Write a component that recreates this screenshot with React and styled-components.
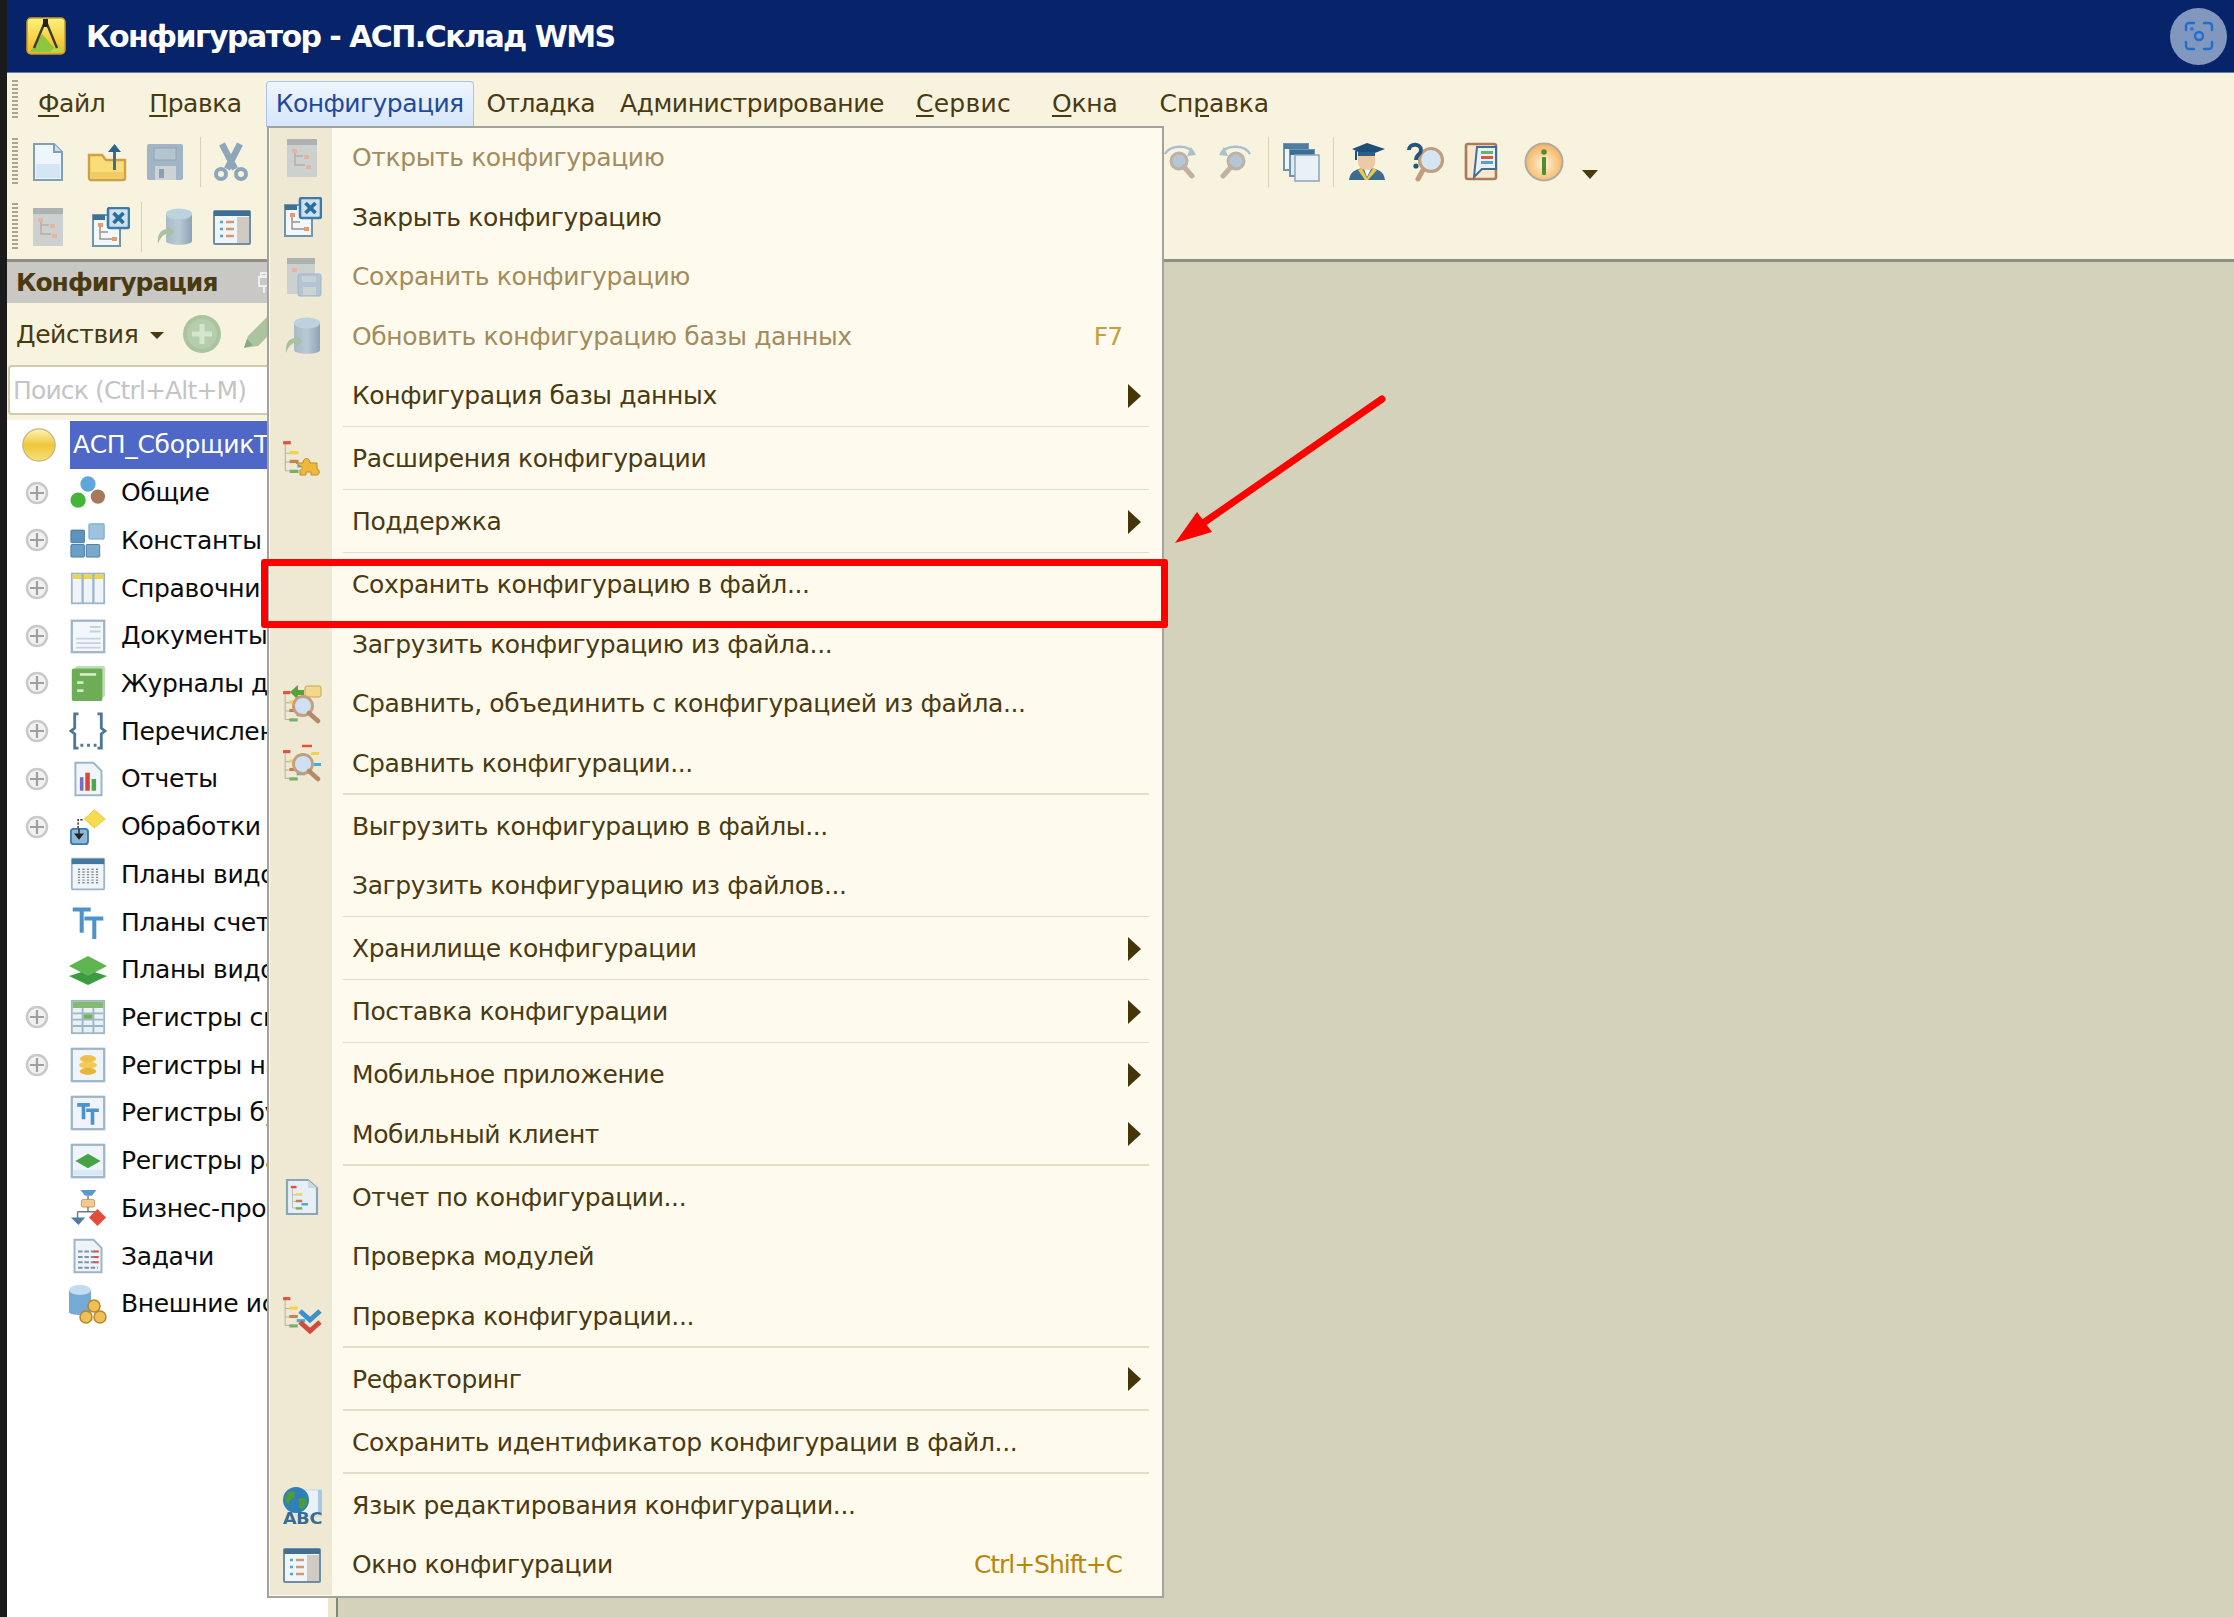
import React from "react";
import styled, { createGlobalStyle } from "styled-components";

const Global = createGlobalStyle`
  html, body { margin: 0; padding: 0; background: #d4d2ba; }
  body { font-family: "DejaVu Sans", "Liberation Sans", sans-serif; }
`;

const FONT = `"DejaVu Sans", "Liberation Sans", sans-serif`;

const Page = styled.div`
  position: relative;
  width: 2234px;
  height: 1617px;
  overflow: hidden;
  display: flex;
  background: #1b1b1b;
  font-family: ${FONT};
`;
const Edge = styled.div`
  width: 7px;
  flex: none;
  background: #1b1b1b;
`;
const Window = styled.div`
  flex: 1;
  min-width: 0;
  display: flex;
  flex-direction: column;
`;
const TitleBar = styled.header`
  flex: none;
  height: 73px;
  box-sizing: border-box;
  border-bottom: 1px solid #5f7fae;
  background: #07246a;
  display: flex;
  align-items: center;
  padding-left: 19px;
  padding-right: 7px;
`;
const TitleText = styled.h1`
  margin: 0 0 0 20px;
  font: bold 30px "DejaVu Sans", sans-serif;
  letter-spacing: -1.55px;
  color: #fff;
  white-space: nowrap;
`;
const ShotButton = styled.div`
  margin-left: auto;
  width: 57px;
  height: 57px;
  border-radius: 50%;
  background: #8297bd;
  display: flex;
  align-items: center;
  justify-content: center;
`;
const MenuBar = styled.nav`
  flex: none;
  height: 54px;
  box-sizing: border-box;
  background: #f7f3df;
  display: flex;
  align-items: center;
  padding-left: 5px;
  color: #4a3a10;
`;
const Grip = styled.div`
  flex: none;
  width: 6px;
  height: ${(p) => p.$h}px;
  background: repeating-linear-gradient(to bottom, #aaa68e 0 2px, transparent 2px 4px);
`;
const BarItem = styled.div`
  flex: none;
  margin-left: ${(p) => p.$ml}px;
  padding-top: 6px;
  font-size: 25px;
  white-space: nowrap;
  letter-spacing: ${(p) => p.$ls ?? -0.45}px;
  ${(p) =>
    p.$active &&
    `
    height: 46px;
    box-sizing: border-box;
    padding: 0 9px 2px;
    display: flex;
    align-items: center;
    color: #1f4a9a;
    background: linear-gradient(#eef5fd, #d5e6fb);
    border: 1px solid #a6c4ec;
    border-bottom: none;
    border-radius: 4px 4px 0 0;
    align-self: flex-end;
  `}
`;
const Mnemonic = styled.span`
  text-decoration: underline;
  text-underline-offset: 3px;
  text-decoration-thickness: 2px;
`;
const Toolbar = styled.div`
  flex: none;
  height: 135px;
  box-sizing: border-box;
  background: #f7f3df;
  border-bottom: 3px solid #8e8e86;
  padding: 8px 0 0 5px;
  display: flex;
  flex-direction: column;
  gap: 11px;
`;
const ToolRow = styled.div`
  height: 54px;
  display: flex;
  align-items: center;
`;
const Tool = styled.div`
  flex: none;
  width: 40px;
  height: 40px;
  margin-left: ${(p) => p.$ml}px;
  display: flex;
  align-items: center;
  justify-content: center;
`;
const ToolSep = styled.div`
  flex: none;
  width: 1px;
  height: 50px;
  margin-left: ${(p) => p.$ml}px;
  background: #d8d2b4;
`;
const DropTriangle = styled.div`
  flex: none;
  margin: 24px 0 0 ${(p) => p.$ml}px;
  width: 0;
  height: 0;
  border-left: 8px solid transparent;
  border-right: 8px solid transparent;
  border-top: 9px solid #4a3a10;
`;
const Main = styled.main`
  flex: 1;
  min-height: 0;
  display: flex;
`;
const Panel = styled.aside`
  flex: none;
  width: 321px;
  display: flex;
  flex-direction: column;
  background: #fff;
`;
const PanelHead = styled.div`
  flex: none;
  height: 41px;
  background: #c9c8c5;
  display: flex;
  align-items: center;
  padding-left: 9px;
  font-size: 25px;
  font-weight: bold;
  color: #4a3a10;
  letter-spacing: -1px;
  white-space: nowrap;
`;
const PinMark = styled.div`
  margin-left: 41px;
  display: flex;
`;
const ActionBar = styled.div`
  flex: none;
  height: 62px;
  background: #f7f3df;
  display: flex;
  align-items: center;
  padding-left: 9px;
  color: #4a3a10;
  font-size: 25px;
  letter-spacing: -0.4px;
`;
const ActionTriangle = styled.div`
  margin: 2px 0 0 12px;
  width: 0;
  height: 0;
  border-left: 7px solid transparent;
  border-right: 7px solid transparent;
  border-top: 7px solid #4a3a10;
`;
const ActionIcon = styled.div`
  flex: none;
  margin-left: ${(p) => p.$ml}px;
  display: flex;
`;
const SearchWrap = styled.div`
  flex: none;
  height: 55px;
  background: #f7f3df;
  padding: 0 0 0 1px;
`;
const SearchBox = styled.div`
  height: 50px;
  box-sizing: border-box;
  border: 2px solid #cfc9ad;
  border-radius: 4px;
  background: #fff;
  display: flex;
  align-items: center;
  padding-left: 3px;
  color: #c4c4c4;
  font-size: 25px;
  letter-spacing: -0.85px;
  white-space: nowrap;
`;
const Tree = styled.ul`
  margin: 0;
  padding: 1px 0 0;
  list-style: none;
  flex: 1;
  min-height: 0;
  overflow: hidden;
`;
const TreeRow = styled.li`
  height: 47.73px;
  display: flex;
  align-items: center;
  padding-left: 18px;
  font-size: 25px;
  color: #0c0c0c;
  white-space: nowrap;
  letter-spacing: -0.35px;
`;
const Expander = styled.div`
  flex: none;
  width: 24px;
  height: 24px;
  display: flex;
`;
const TreeIcon = styled.div`
  flex: none;
  width: 36px;
  height: 40px;
  margin-left: 21px;
  display: flex;
  align-items: center;
  justify-content: center;
`;
const TreeLabel = styled.span`
  margin-left: 15px;
`;
const RootBall = styled.div`
  flex: none;
  margin-left: -3px;
  width: 34px;
  display: flex;
`;
const RootLabel = styled.div`
  margin-left: 14px;
  flex: 1;
  height: 48px;
  display: flex;
  align-items: center;
  padding-left: 3px;
  background: #4f67c6;
  color: #fff;
`;
const Splitter = styled.div`
  flex: none;
  width: 8px;
  background: #ece6cf;
  border-right: 2px solid #85857f;
`;
const Workspace = styled.div`
  flex: 1;
  background: #d4d2ba;
`;

/* overlays */
const DropMenu = styled.div`
  position: absolute;
  left: 267px;
  top: 126px;
  width: 897px;
  box-sizing: border-box;
  border: 2px solid #a3a39d;
  background: #fefaed;
  padding: 0 1px 1px;
`;
const MenuList = styled.ul`
  margin: 0;
  padding: 0;
  list-style: none;
  background: linear-gradient(to right, #efe8d2 62px, #fefaed 62px);
`;
const MenuRow = styled.li`
  height: 59.5px;
  display: flex;
  align-items: center;
  color: ${(p) => (p.$disabled ? "#a28c5c" : "#4a3a10")};
  font-size: 25px;
  letter-spacing: -0.38px;
  white-space: nowrap;
`;
const MenuIcon = styled.div`
  flex: none;
  width: 62px;
  height: 100%;
  display: flex;
  align-items: center;
  justify-content: center;
  padding-left: 1px;
  box-sizing: border-box;
`;
const MenuLabel = styled.span`
  margin-left: 20px;
`;
const Shortcut = styled.span`
  margin-left: auto;
  margin-right: 39px;
  color: ${(p) => (p.$disabled ? "#c79f3c" : "#b8860b")};
  letter-spacing: -1.05px;
`;
const SubArrow = styled.div`
  margin-left: auto;
  margin-right: 20px;
  width: 0;
  height: 0;
  border-top: 12px solid transparent;
  border-bottom: 12px solid transparent;
  border-left: 13px solid #453508;
`;
const MenuSep = styled.li`
  height: 3.5px;
  position: relative;
  &::after {
    content: "";
    position: absolute;
    left: 73px;
    right: 12px;
    top: 0;
    height: 1.5px;
    background: #e3ddca;
  }
`;
const RedFrame = styled.div`
  position: absolute;
  left: 261px;
  top: 559px;
  width: 907px;
  height: 69px;
  box-sizing: border-box;
  border: 7px solid #fe0000;
  border-radius: 3px;
`;
const ArrowSvg = styled.svg`
  position: absolute;
  left: 1160px;
  top: 385px;
`;
const Ic = styled.svg`
  display: block;
  flex: none;
  filter: blur(${(p) => (p.$sharp ? 0 : 0.55)}px);
`;

const Icon = ({ size = 40, sharp, children }) => (
  <Ic width={size} height={size} viewBox="0 0 40 40" $sharp={sharp}>
    {children}
  </Ic>
);

const TreeBars = ({ dx = 0, dy = 0, s = 1 }) => (
  <g transform={`translate(${dx} ${dy}) scale(${s})`}>
    <path d="M3 4v24M3 12h5M3 20h5M3 28h5" stroke="#b5b5a8" strokeWidth="1" fill="none" />
    <rect x="1" y="1" width="7" height="3" fill="#e8503c" />
    <rect x="7" y="10" width="8" height="3" fill="#f3d24d" />
    <rect x="7" y="18" width="8" height="3" fill="#c2805a" />
    <rect x="14" y="22" width="8" height="3" fill="#3fb1d9" />
    <rect x="7" y="27" width="8" height="3" fill="#77b169" />
  </g>
);

const Doc = () => (
  <Icon>
    <path d="M6 2h20l8 8v28H6z" fill="#eef5fb" stroke="#7f9fb8" strokeWidth="2" />
    <path d="M8 22h24v14H8z" fill="#d4e5f3" />
    <path d="M26 2v8h8" fill="#cfe0ec" stroke="#7f9fb8" strokeWidth="2" />
  </Icon>
);
const Folder = () => (
  <Icon>
    <path d="M2 18v-5h13l4 5h19v18a2 2 0 0 1-2 2H4a2 2 0 0 1-2-2z" fill="#f8dd78" stroke="#cfa143" strokeWidth="2.4" />
    <path d="M4 30h32v6H4z" fill="#f3cb66" />
    <rect x="26" y="8" width="3" height="20" fill="#3d7090" />
    <path d="M21 10l6.500-8 6.500 8z" fill="#2e6587" />
  </Icon>
);
const Save = () => (
  <Icon>
    <rect x="2" y="2" width="36" height="36" rx="2" fill="#a2b5c6" />
    <rect x="9" y="6" width="22" height="12" fill="#b4c5cf" stroke="#8fa5b8" />
    <rect x="10" y="24" width="21" height="14" fill="#cdd3d2" />
    <rect x="14" y="27" width="5" height="9" fill="#88a0b5" />
  </Icon>
);
const Scissors = () => (
  <Icon>
    <path d="M11 2l13 25M29 2L16 27" stroke="#8ea5ba" strokeWidth="6.500" fill="none" />
    <circle cx="10" cy="32" r="5" fill="none" stroke="#8ea5ba" strokeWidth="4" />
    <circle cx="30" cy="32" r="5" fill="none" stroke="#8ea5ba" strokeWidth="4" />
  </Icon>
);
const CfgGray = () => (
  <Icon>
    <rect x="5" y="1" width="30" height="38" rx="1" fill="#ccd0cf" />
    <rect x="5" y="1" width="30" height="6" fill="#acb2b2" />
    <path d="M13 13v14h10M13 18h8" stroke="#b7b0a4" strokeWidth="1.500" fill="none" />
    <rect x="10" y="11" width="5" height="4" fill="#e0b7a0" />
    <rect x="22" y="17" width="5" height="4" fill="#e0b7a0" />
    <rect x="24" y="27" width="5" height="4" fill="#e0b7a0" />
  </Icon>
);
const CfgClose = () => (
  <Icon>
    <rect x="3" y="8" width="27" height="31" fill="#f2f7fb" stroke="#6f95b0" strokeWidth="2" />
    <rect x="3" y="8" width="12" height="5" fill="#3f6f95" />
    <path d="M10 18v14h12M10 25h8" stroke="#9a9488" strokeWidth="1.500" fill="none" />
    <rect x="8" y="16" width="5" height="4" fill="#e79a70" />
    <rect x="22" y="30" width="5" height="4" fill="#e79a70" />
    <rect x="18" y="1" width="21" height="20" rx="2" fill="#cfe1ee" stroke="#3b7ba8" strokeWidth="2.600" />
    <path d="M23.500 6l10 10M33.500 6l-10 10" stroke="#2a6da0" strokeWidth="3.800" />
  </Icon>
);
const Db = () => (
  <Icon>
    <defs>
      <linearGradient id="dbg" x1="0" x2="1" y1="0" y2="0">
        <stop offset="0" stopColor="#a9bbc9" />
        <stop offset="0.5" stopColor="#b9c9d4" />
        <stop offset="1" stopColor="#8da3b5" />
      </linearGradient>
    </defs>
    <path d="M12 7v27c0 5 26 5 26 0V7z" fill="url(#dbg)" />
    <ellipse cx="25" cy="7" rx="13" ry="5.500" fill="#bcd2df" />
    <path d="M4 37c-1-9 2-14 9-15l-1-4 9 7-9 6v-4c-3 1-6 4-8 10z" fill="#a9c0a4" />
  </Icon>
);
const CfgWindow = () => (
  <Icon>
    <rect x="2" y="4" width="36" height="33" rx="1" fill="#f0f5f8" stroke="#6f8ea5" strokeWidth="2" />
    <rect x="2" y="4" width="36" height="5" fill="#3f6f95" />
    <rect x="25" y="10" width="12" height="26" fill="#cfcbc0" />
    <path d="M8 15h3M8 22h3M8 29h3" stroke="#59a3cf" strokeWidth="2.500" />
    <path d="M14 15h8M14 22h8M14 29h8" stroke="#d19a77" strokeWidth="2.500" />
  </Icon>
);
const SearchArc = ({ flip }) => (
  <Icon>
    <g transform={flip ? "matrix(-1 0 0 1 40 0)" : undefined}>
      <path d="M5 12c5-9 22-10 29-1" fill="none" stroke="#a8c0cf" strokeWidth="2.500" />
      <path d="M31 5l5 8-9 1z" fill="#a8c0cf" />
      <circle cx="19" cy="19" r="8" fill="#b6c6d3" stroke="#bdb2a8" strokeWidth="3" />
      <path d="M24 25l8 9" stroke="#c3b0a4" strokeWidth="5" strokeLinecap="round" />
    </g>
  </Icon>
);
const CopyWin = () => (
  <Icon>
    <rect x="3" y="2" width="24" height="26" fill="#eef3f8" stroke="#6e94b0" strokeWidth="2" />
    <rect x="3" y="2" width="24" height="5" fill="#4d7ea2" />
    <rect x="9" y="8" width="24" height="26" fill="#dfe9f2" stroke="#6e94b0" strokeWidth="2" />
    <rect x="9" y="8" width="24" height="5" fill="#3c6f95" />
    <rect x="14" y="13" width="24" height="26" fill="#e9f0f6" stroke="#8aa6bb" strokeWidth="1.500" />
  </Icon>
);
const Graduate = () => (
  <Icon>
    <path d="M2 38c1-9 8-12 18-12s17 3 18 12z" fill="#3e6c8e" />
    <path d="M15 26l5 10 6-10 4 2-9 10h-3L11 28z" fill="#e9c84e" />
    <path d="M17 27l3 8 4-8z" fill="#fff" />
    <path d="M11 12h17v8c0 5-3 8-8 8s-9-3-9-8z" fill="#eec9a6" />
    <path d="M5 7L20 1l18 6-18 7z" fill="#1f4f79" />
    <path d="M9 9v9" stroke="#1f4f79" strokeWidth="2" />
    <path d="M11 10h17v4H11z" fill="#2a5f87" />
  </Icon>
);
const HelpSearch = () => (
  <Icon>
    <circle cx="25" cy="18" r="11.500" fill="#d4e4f2" stroke="#c29e7c" strokeWidth="3.200" />
    <path d="M17 28l-5 9" stroke="#c29e7c" strokeWidth="5" strokeLinecap="round" />
    <path d="M3 8c0-7 12-7 12 0 0 5-5 4-5 10" fill="none" stroke="#26557c" strokeWidth="3.800" />
    <circle cx="10" cy="24" r="2.600" fill="#26557c" />
  </Icon>
);
const BookNote = () => (
  <Icon>
    <rect x="4" y="2" width="30" height="35" rx="2" fill="#f9e8cf" stroke="#a87c5a" strokeWidth="2.600" />
    <path d="M15 5h19v22H20l-8 8z" fill="#e9f1f7" stroke="#3f6f95" strokeWidth="2" />
    <rect x="19" y="9" width="12" height="3" fill="#6ab06a" />
    <rect x="19" y="14" width="12" height="3" fill="#d9564d" />
    <rect x="19" y="19" width="12" height="3" fill="#59a0c9" />
  </Icon>
);
const Info = () => (
  <Icon>
    <defs>
      <radialGradient id="ifg" cx="0.5" cy="0.55" r="0.55">
        <stop offset="0" stopColor="#fff4dc" />
        <stop offset="1" stopColor="#f5b25c" />
      </radialGradient>
    </defs>
    <circle cx="20" cy="20" r="18.500" fill="url(#ifg)" stroke="#b3aba0" strokeWidth="2" />
    <circle cx="20" cy="10" r="2.800" fill="#4e8f2a" />
    <rect x="18" y="15" width="4" height="18" rx="1" fill="#4e8f2a" />
  </Icon>
);
const CfgSave = () => (
  <Icon>
    <rect x="5" y="1" width="28" height="36" fill="#ccd0cf" />
    <rect x="5" y="1" width="28" height="6" fill="#acb2b2" />
    <rect x="10" y="11" width="5" height="4" fill="#e0b7a0" />
    <rect x="16" y="17" width="23" height="22" rx="2" fill="#b3c5d3" stroke="#a2b5c6" />
    <rect x="20" y="19" width="14" height="6" fill="#c4d2da" />
    <rect x="21" y="30" width="13" height="8" fill="#cdd3d2" />
  </Icon>
);
const ExtTree = () => (
  <Icon>
    <TreeBars dx={0} dy={1} s={1.1} />
    <path d="M14 24h7c0-6 7-6 7 0h7v6c3 0 3 6 0 6h-6v-3h-5v3h-6v-5c3 0 3-4 0-4z" fill="#efb83c" stroke="#c48a25" strokeWidth="1" />
  </Icon>
);
const Glass = ({ x = 22, y = 24 }) => (
  <g>
    <circle cx={x} cy={y} r="9.500" fill="#cfe0f2" stroke="#c39f7d" strokeWidth="2.800" />
    <path d={`M${x + 6} ${y + 7}l9 8`} stroke="#b38a6a" strokeWidth="4.500" strokeLinecap="round" />
  </g>
);
const CompareFile = () => (
  <Icon>
    <TreeBars dx={0} dy={6} s={1.05} />
    <path d="M16 1v5h6v5h-6v5l-8-8z" fill="#5aa03b" />
    <rect x="23" y="2" width="16" height="11" rx="2" fill="#f2d88a" stroke="#c9a65a" />
    <Glass x={21} y={22} />
  </Icon>
);
const Compare = () => (
  <Icon>
    <TreeBars dx={0} dy={6} s={1.05} />
    <path d="M20 3h10" stroke="#e8503c" strokeWidth="2.500" />
    <rect x="29" y="9" width="8" height="3" fill="#f3d24d" />
    <rect x="32" y="20" width="7" height="3" fill="#3fb1d9" />
    <Glass x={21} y={21} />
  </Icon>
);
const Report = () => (
  <Icon>
    <path d="M5 3h21l9 8v26H5z" fill="#e7eff5" stroke="#8aa6bb" strokeWidth="2.200" />
    <path d="M26 3v8h9z" fill="#c8d9e5" />
    <TreeBars dx={8} dy={8} s={0.82} />
  </Icon>
);
const Check = () => (
  <Icon>
    <TreeBars dx={0} dy={0} s={1.05} />
    <path d="M18 15l10 9 10-9" fill="none" stroke="#3e8fd0" strokeWidth="5" />
    <path d="M18 26l10 9 10-9" fill="none" stroke="#cf4a3f" strokeWidth="5" />
  </Icon>
);
const AbcGlobe = () => (
  <Icon>
    <rect x="14" y="5" width="26" height="26" fill="#eaf2f8" stroke="#c5d5e1" />
    <path d="M36 5h4v25h-4z" fill="#a6c8e2" />
    <circle cx="14" cy="15" r="13" fill="#2f7fb8" />
    <path d="M5 8c5-3 8-2 8 2s-6 4-6 8-4-2-4-4zM16 14c4-2 9-1 9 2s-3 9-6 8-1-6-3-10z" fill="#4f9a3c" />
    <text x="1" y="38.500" fontFamily="DejaVu Sans" fontWeight="bold" fontSize="15" fill="#3b6c93" textLength="39" lengthAdjust="spacingAndGlyphs">ABC</text>
  </Icon>
);

const Common = () => (
  <Icon size={36}>
    <circle cx="20" cy="10" r="8.500" fill="#5fa7d8" />
    <circle cx="31" cy="24" r="8" fill="#a6795a" />
    <circle cx="9" cy="28" r="8.500" fill="#45b53a" />
  </Icon>
);
const Blocks = () => (
  <Icon size={36}>
    <rect x="1" y="9" width="15" height="14" rx="1" fill="#5d93bd" stroke="#3f78a5" />
    <rect x="21" y="2" width="17" height="17" rx="1" fill="#9cc4e0" stroke="#6e9fc1" />
    <rect x="1" y="25" width="15" height="14" rx="1" fill="#6b9fc4" stroke="#3f78a5" />
    <rect x="18" y="25" width="15" height="14" rx="1" fill="#7da9c9" stroke="#3f78a5" />
  </Icon>
);
const Columns = () => (
  <Icon size={36}>
    <rect x="2" y="4" width="36" height="33" fill="#eef4f9" stroke="#9db5c8" strokeWidth="2" />
    <rect x="3" y="5" width="34" height="5" fill="#f2d24a" />
    <path d="M14 4v33M26 4v33" stroke="#9db5c8" strokeWidth="2.500" />
  </Icon>
);
const Paper = () => (
  <Icon size={36}>
    <rect x="2" y="3" width="36" height="35" fill="#f3f7fb" stroke="#9db5c8" strokeWidth="2.500" />
    <path d="M22 10h12M22 15h12M7 23h27M7 28h27M7 33h27" stroke="#c3d3df" strokeWidth="2" />
  </Icon>
);
const Journal = () => (
  <Icon size={36}>
    <rect x="6" y="1" width="33" height="35" rx="2" fill="#c2dcb7" />
    <rect x="2" y="4" width="34" height="36" rx="2" fill="#6cad55" />
    <rect x="11" y="9" width="18" height="3" fill="#d5ecc7" />
    <rect x="8" y="18" width="7" height="3" fill="#d5ecc7" />
    <rect x="8" y="27" width="7" height="3" fill="#d5ecc7" />
  </Icon>
);
const Enum = () => (
  <Icon size={38}>
    <path d="M10 2H6v15l-4 3 4 3v15h4M30 2h4v15l4 3-4 3v15h-4" fill="none" stroke="#4f7896" strokeWidth="3" />
    <path d="M12 35h3M19 35h3M26 35h3" stroke="#4f7896" strokeWidth="3" />
  </Icon>
);
const ReportChart = () => (
  <Icon size={36}>
    <path d="M6 2h20l9 9v27H6z" fill="#f0f5f9" stroke="#9db5c8" strokeWidth="2.200" />
    <rect x="11" y="18" width="4" height="15" fill="#7a6ec2" />
    <rect x="17" y="13" width="5" height="20" fill="#d9453b" />
    <rect x="24" y="20" width="5" height="13" fill="#4fa64a" />
  </Icon>
);
const Processor = () => (
  <Icon size={36}>
    <path d="M27 1l12 10-12 10-11-10z" fill="#f7dc4e" stroke="#e5c13c" />
    <path d="M14 12h-5v16" fill="none" stroke="#333" strokeWidth="1.600" strokeDasharray="2.500 1.500" />
    <rect x="1" y="22" width="19" height="17" rx="3" fill="#8db8d8" stroke="#3f78a5" strokeWidth="2" />
    <path d="M10 22v9M6 28l4 5 4-5z" fill="#222" stroke="#222" strokeWidth="1.500" />
  </Icon>
);
const Calendar = () => (
  <Icon size={36}>
    <rect x="2" y="3" width="36" height="34" rx="1" fill="#f1f5f8" stroke="#9db5c8" strokeWidth="2" />
    <rect x="2" y="3" width="36" height="6" fill="#43779e" />
    <path d="M10 14v18M15 14v18M20 14v18M25 14v18M30 14v18" stroke="#7e8f9c" strokeWidth="2.500" strokeDasharray="1.500 1.500" />
  </Icon>
);
const Tt = () => (
  <Icon size={36}>
    <path d="M3 6h20M13 6v26" stroke="#4e93c8" strokeWidth="4.500" fill="none" />
    <path d="M16 16h21M27 16v23" stroke="#4e93c8" strokeWidth="4.500" fill="none" />
  </Icon>
);
const Layers = () => (
  <Icon size={40}>
    <path d="M20 20l19 6-19 9-19-9z" fill="#3d9b3f" />
    <path d="M20 6l19 10-19 10L1 16z" fill="#5fb552" />
  </Icon>
);
const GridGreen = () => (
  <Icon size={36}>
    <rect x="2" y="2" width="36" height="36" fill="#eaf1f5" stroke="#9db5c8" strokeWidth="2" />
    <rect x="3" y="3" width="34" height="7" fill="#84b974" />
    <path d="M3 16h34M3 23h34M3 30h34M14 10v28M26 10v28" stroke="#9db5c8" strokeWidth="2" />
    <rect x="15" y="17" width="10" height="5" fill="#6fb35a" />
  </Icon>
);
const Boxed = ({ children }) => (
  <Icon size={36}>
    <rect x="2" y="2" width="36" height="36" fill="#eef4f9" stroke="#9db5c8" strokeWidth="2.500" />
    {children}
  </Icon>
);
const Biz = () => (
  <Icon size={38}>
    <path d="M12 1h17l-5 6H17z" fill="#5b9ac8" />
    <rect x="13" y="11" width="14" height="8" rx="2" fill="#f2c98f" stroke="#c39a5d" />
    <path d="M20 7v4M20 19v5M9 24h22M9 24v7" stroke="#777" strokeWidth="1.500" fill="none" />
    <path d="M2 30h15l-7 8z" fill="#4b7ca5" />
    <path d="M30 21l9 9-9 9-9-9z" fill="#e24d3d" />
  </Icon>
);
const Tasks = () => (
  <Icon size={36}>
    <path d="M5 2h21l9 9v27H5z" fill="#eef3f7" stroke="#9db5c8" strokeWidth="2.200" />
    <path d="M9 15h22M9 21h22M9 27h22M9 33h22" stroke="#7e93a3" strokeWidth="2.200" strokeDasharray="5 2" />
    <path d="M26 15h6M26 21h6M26 27h6" stroke="#d9544b" strokeWidth="2.200" />
  </Icon>
);
const ExtSrc = () => (
  <Icon size={40}>
    <path d="M1 6v22c0 4 22 4 22 0V6z" fill="#74aad6" />
    <ellipse cx="12" cy="6" rx="11" ry="5" fill="#c2dcef" />
    <circle cx="26" cy="22" r="6" fill="#efc055" stroke="#b8862c" strokeWidth="1.500" />
    <circle cx="18" cy="33" r="6" fill="#efc055" stroke="#b8862c" strokeWidth="1.500" />
    <circle cx="32" cy="33" r="6" fill="#efc055" stroke="#b8862c" strokeWidth="1.500" />
  </Icon>
);
const PlusCircle = () => (
  <Ic width="24" height="24" viewBox="0 0 24 24" $sharp>
    <circle cx="12" cy="12" r="10" fill="#f1f1f1" stroke="#c9c9c9" strokeWidth="2.500" />
    <path d="M12 5v14M5 12h14" stroke="#9f9f9f" strokeWidth="2.200" />
  </Ic>
);
const Ball = () => (
  <Icon size={34}>
    <defs>
      <linearGradient id="ballg" x1="0" x2="0" y1="0" y2="1">
        <stop offset="0" stopColor="#fdf3b8" />
        <stop offset="0.5" stopColor="#eec83a" />
        <stop offset="1" stopColor="#f7e07c" />
      </linearGradient>
    </defs>
    <circle cx="20" cy="20" r="19" fill="url(#ballg)" stroke="#c9b483" strokeWidth="1.500" />
  </Icon>
);
const AddGreen = () => (
  <Icon>
    <circle cx="20" cy="20" r="19" fill="#a9c49e" />
    <circle cx="20" cy="20" r="15" fill="#b6cdac" />
    <path d="M20 10v20M10 20h20" stroke="#d6e5cf" strokeWidth="5" />
  </Icon>
);
const Pencil = () => (
  <Icon>
    <path d="M4 34l4-12L28 2l10 10-20 20z" fill="#a9c49e" />
    <path d="M4 34l3-9 6 6z" fill="#8aa884" />
  </Icon>
);
const Pin = () => (
  <Ic width="12" height="22" viewBox="0 0 12 22">
    <path d="M3 1h6v3H3zM1 5h10v9H1zM6 14v7" fill="none" stroke="#eeeeea" strokeWidth="2" />
  </Ic>
);

const AppLogo = () => (
  <Ic width="40" height="38" viewBox="0 0 40 38" $sharp>
    <defs>
      <linearGradient id="logog" x1="0" x2="0" y1="0" y2="1">
        <stop offset="0" stopColor="#fff27a" />
        <stop offset="1" stopColor="#f0b81f" />
      </linearGradient>
    </defs>
    <rect x="1" y="1" width="38" height="36" rx="4" fill="url(#logog)" stroke="#c49a2f" strokeWidth="1.500" />
    <path d="M4 35L16 17l16 18z" fill="#8dc63f" />
    <path d="M24 35l8-8 5 8z" fill="#b5d94a" />
    <path d="M18 7L8 31M21 7l10 24" stroke="#3d3d30" strokeWidth="2.400" fill="none" />
    <path d="M17 2h5v8h-5z" fill="#222" />
  </Ic>
);

const Camera = () => (
  <svg width="30" height="30" viewBox="0 0 30 30" fill="none" stroke="#1f6fd0" strokeWidth="2.400" strokeLinecap="round">
    <path d="M2 9V5a3 3 0 0 1 3-3h5M20 2h5a3 3 0 0 1 3 3v4M28 21v4a3 3 0 0 1-3 3h-5M10 28H5a3 3 0 0 1-3-3v-4" />
    <circle cx="15" cy="15" r="4" />
    <circle cx="8" cy="8" r="0.600" />
  </svg>
);

const treeItems = [
  ["Общие", <Common />, true],
  ["Константы", <Blocks />, true],
  ["Справочники", <Columns />, true],
  ["Документы", <Paper />, true],
  ["Журналы документов", <Journal />, true],
  ["Перечисления", <Enum />, true],
  ["Отчеты", <ReportChart />, true],
  ["Обработки", <Processor />, true],
  ["Планы видов характеристик", <Calendar />, false],
  ["Планы счетов", <Tt />, false],
  ["Планы видов расчета", <Layers />, false],
  ["Регистры сведений", <GridGreen />, true],
  [
    "Регистры накопления",
    <Boxed>
      <ellipse cx="20" cy="13" rx="9" ry="4" fill="#efc04a" />
      <ellipse cx="20" cy="20" rx="10" ry="4" fill="#f2ca55" />
      <ellipse cx="20" cy="27" rx="9" ry="4" fill="#e8b53c" />
    </Boxed>,
    true,
  ],
  [
    "Регистры бухгалтерии",
    <Boxed>
      <path d="M8 11h14M15 11v16M18 17h14M25 17v16" stroke="#4e93c8" strokeWidth="4" fill="none" />
    </Boxed>,
    false,
  ],
  [
    "Регистры расчета",
    <Boxed>
      <path d="M20 12l14 8-14 8-14-8z" fill="#45a245" />
      <path d="M4 30h32v6H4z" fill="#d9e8f2" />
    </Boxed>,
    false,
  ],
  ["Бизнес-процессы", <Biz />, false],
  ["Задачи", <Tasks />, false],
  ["Внешние источники данных", <ExtSrc />, false],
];

const menuItems = [
  { t: "Открыть конфигурацию", d: 1, i: <CfgGray /> },
  { t: "Закрыть конфигурацию", i: <CfgClose /> },
  { t: "Сохранить конфигурацию", d: 1, i: <CfgSave /> },
  { t: "Обновить конфигурацию базы данных", d: 1, i: <Db />, k: "F7" },
  { t: "Конфигурация базы данных", sub: 1 },
  { sep: 1 },
  { t: "Расширения конфигурации", i: <ExtTree /> },
  { sep: 1 },
  { t: "Поддержка", sub: 1 },
  { sep: 1 },
  { t: "Сохранить конфигурацию в файл..." },
  { t: "Загрузить конфигурацию из файла..." },
  { t: "Сравнить, объединить с конфигурацией из файла...", i: <CompareFile /> },
  { t: "Сравнить конфигурации...", i: <Compare /> },
  { sep: 1 },
  { t: "Выгрузить конфигурацию в файлы..." },
  { t: "Загрузить конфигурацию из файлов..." },
  { sep: 1 },
  { t: "Хранилище конфигурации", sub: 1 },
  { sep: 1 },
  { t: "Поставка конфигурации", sub: 1 },
  { sep: 1 },
  { t: "Мобильное приложение", sub: 1 },
  { t: "Мобильный клиент", sub: 1 },
  { sep: 1 },
  { t: "Отчет по конфигурации...", i: <Report /> },
  { t: "Проверка модулей" },
  { t: "Проверка конфигурации...", i: <Check /> },
  { sep: 1 },
  { t: "Рефакторинг", sub: 1 },
  { sep: 1 },
  { t: "Сохранить идентификатор конфигурации в файл..." },
  { sep: 1 },
  { t: "Язык редактирования конфигурации...", i: <AbcGlobe /> },
  { t: "Окно конфигурации", i: <CfgWindow />, k: "Ctrl+Shift+C" },
];

export default function App() {
  return (
    <Page>
      <Global />
      <Edge />
      <Window>
        <TitleBar>
          <AppLogo />
          <TitleText>Конфигуратор - АСП.Склад WMS</TitleText>
          <ShotButton>
            <Camera />
          </ShotButton>
        </TitleBar>
        <MenuBar>
          <Grip $h={40} />
          <BarItem $ml={20}>
            <Mnemonic>Ф</Mnemonic>айл
          </BarItem>
          <BarItem $ml={44}>
            <Mnemonic>П</Mnemonic>равка
          </BarItem>
          <BarItem $ml={24} $active $ls={-0.55}>
            Конфигурация
          </BarItem>
          <BarItem $ml={13} $ls={-0.7}>Отладка</BarItem>
          <BarItem $ml={25}>Администрирование</BarItem>
          <BarItem $ml={32} $ls={0.25}>
            <Mnemonic>С</Mnemonic>ервис
          </BarItem>
          <BarItem $ml={41} $ls={-0.2}>
            <Mnemonic>О</Mnemonic>кна
          </BarItem>
          <BarItem $ml={42} $ls={-0.1}>
            Сп<Mnemonic>р</Mnemonic>авка
          </BarItem>
        </MenuBar>
        <Toolbar>
          <ToolRow>
            <Grip $h={48} />
            <Tool $ml={9.5}><Doc /></Tool>
            <Tool $ml={19.5}><Folder /></Tool>
            <Tool $ml={18}><Save /></Tool>
            <ToolSep $ml={15} />
            <Tool $ml={10}><Scissors /></Tool>
            <Tool $ml={909}><SearchArc /></Tool>
            <Tool $ml={15}><SearchArc flip /></Tool>
            <ToolSep $ml={13} />
            <Tool $ml={12}><CopyWin /></Tool>
            <ToolSep $ml={12} />
            <Tool $ml={13}><Graduate /></Tool>
            <Tool $ml={19}><HelpSearch /></Tool>
            <Tool $ml={16}><BookNote /></Tool>
            <Tool $ml={22}><Info /></Tool>
            <DropTriangle $ml={18} />
          </ToolRow>
          <ToolRow>
            <Grip $h={48} />
            <Tool $ml={9.5}><CfgGray /></Tool>
            <Tool $ml={22.5}><CfgClose /></Tool>
            <ToolSep $ml={11} />
            <Tool $ml={12}><Db /></Tool>
            <Tool $ml={18}><CfgWindow /></Tool>
          </ToolRow>
        </Toolbar>
        <Main>
          <Panel>
            <PanelHead>
              Конфигурация
              <PinMark>
                <Pin />
              </PinMark>
            </PanelHead>
            <ActionBar>
              Действия
              <ActionTriangle />
              <ActionIcon $ml={18}><AddGreen /></ActionIcon>
              <ActionIcon $ml={18}><Pencil /></ActionIcon>
            </ActionBar>
            <SearchWrap>
              <SearchBox>Поиск (Ctrl+Alt+M)</SearchBox>
            </SearchWrap>
            <Tree>
              <TreeRow>
                <RootBall>
                  <Ball />
                </RootBall>
                <RootLabel>АСП_СборщикТСД</RootLabel>
              </TreeRow>
              {treeItems.map(([label, icon, exp]) => (
                <TreeRow key={label}>
                  <Expander>{exp && <PlusCircle />}</Expander>
                  <TreeIcon>{icon}</TreeIcon>
                  <TreeLabel>{label}</TreeLabel>
                </TreeRow>
              ))}
            </Tree>
          </Panel>
          <Splitter />
          <Workspace />
        </Main>
      </Window>

      <DropMenu>
        <MenuList>
          {menuItems.map((m, i) =>
            m.sep ? (
              <MenuSep key={i} />
            ) : (
              <MenuRow key={i} $disabled={m.d}>
                <MenuIcon>{m.i}</MenuIcon>
                <MenuLabel>{m.t}</MenuLabel>
                {m.k && <Shortcut $disabled={m.d}>{m.k}</Shortcut>}
                {m.sub && <SubArrow />}
              </MenuRow>
            )
          )}
        </MenuList>
      </DropMenu>

      <RedFrame />
      <ArrowSvg width="230" height="165" viewBox="1160 385 230 165">
        <path d="M1382 399L1196 528" stroke="#fe0000" strokeWidth="7" strokeLinecap="round" fill="none" />
        <path d="M1175 543l22-31 15 20z" fill="#fe0000" />
      </ArrowSvg>
    </Page>
  );
}
